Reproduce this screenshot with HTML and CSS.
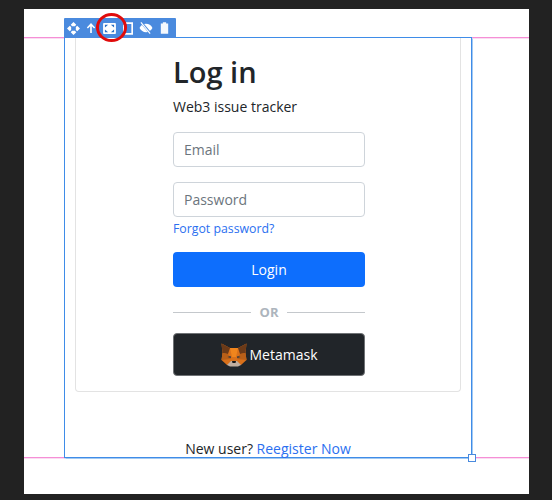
FILE: index.html
```html
<!DOCTYPE html>
<html>
<head>
    <link rel="stylesheet" href="styles.css">
    <title>Log in</title>
</head>
<body>
<div class="canvas">
    <div class="guide guide-top"></div>
    <div class="guide guide-bottom"></div>

    <div class="frame">
        <div class="toolbar">
            <svg class="tool tool-move" viewBox="0 0 14 14"><path d="M7 0l3 3-1.500 1.500h-3L4 3zM14 7l-3 3-1.500-1.500v-3L11 4zM7 14l-3-3 1.500-1.500h3L10 11zM0 7l3-3 1.500 1.500v3L3 10z" fill="#fff"/></svg>
            <svg class="tool tool-up" viewBox="0 0 12 14"><path d="M6 1l5 5.400-1.300 1.200L7 4.900V13H5V4.900L2.300 7.600 1 6.400z" fill="#fff"/></svg>
            <svg class="tool tool-full" viewBox="0 0 14 12"><rect x="0" y="0" width="14" height="12" rx="1" fill="#fff"/><path d="M2 2h3.500L2 5zM12 2v3L8.500 2zM2 10V7l3.500 3zM12 10H8.500L12 7z" fill="#2a6fc4"/></svg>
            <svg class="tool tool-copy" viewBox="0 0 12 15"><path d="M3 1h8v13H1V3" fill="none" stroke="#fff" stroke-width="2"/></svg>
            <svg class="tool tool-eye" viewBox="0 0 15 13"><path d="M0.500 6.500C2 3.500 4.500 2 7.500 2s5.500 1.500 7 4.500C13 9.500 10.500 11 7.500 11S2 9.500 0.500 6.500z" fill="#fff"/><path d="M2.500 0.500l10 12" stroke="#4a8ade" stroke-width="2.400"/><path d="M2 0.500l10 12" stroke="#fff" stroke-width="1.200"/></svg>
            <svg class="tool tool-trash" viewBox="0 0 11 14"><path d="M3.500 0h4v1.500H10V14H1V1.500h2.500z" fill="#f4f8fd"/></svg>
        </div>
        <div class="focus-ring"></div>
        <div class="handle"></div>

        <div class="card">
            <form class="login-form">
                <h1 class="title">Log in</h1>
                <p class="subtitle">Web3 issue tracker</p>
                <input class="field field-email" type="text" placeholder="Email">
                <input class="field" type="password" placeholder="Password">
                <a class="forgot" href="#">Forgot password?</a>
                <button class="btn btn-login" type="button">Login</button>
                <div class="divider"><span>OR</span></div>
                <button class="btn btn-metamask" type="button">
                    <svg class="fox" viewBox="0 0 26 24">
                        <path d="M0.500 0.500L9 5h8l8.500-4.500L24.500 10l1 7L20 22H6L0.500 17l1-7z" fill="#d9701a"/>
                        <path d="M0.500 0.500L9 5 7 11 1.500 10z" fill="#6b3a18"/>
                        <path d="M25.500 0.500L17 5l2 6 5.500-1z" fill="#6b3a18"/>
                        <path d="M9 5h8l-2 9h-4z" fill="#f0851d"/>
                        <path d="M1.500 10l5.500 1 3 5-9.500 1z" fill="#b85f18"/>
                        <path d="M24.500 10l-5.500 1-3 5 9.500 1z" fill="#b85f18"/>
                        <path d="M6.500 14l3-1 0.500 2z" fill="#233447"/>
                        <path d="M19.500 14l-3-1-0.500 2z" fill="#233447"/>
                        <path d="M6 22l4-4h6l4 4-3 1.500H9z" fill="#c0ad9e"/>
                        <path d="M11 18h4l-0.500 2h-3z" fill="#161616"/>
                    </svg>
                    Metamask
                </button>
            </form>
        </div>
        <p class="signup">New user? <a href="#">Reegister Now</a></p>
    </div>
</div>
</body>
</html>
```
FILE: styles.css
```css
body, html {
    margin: 0;
    padding: 0;
    height: 100%;
    background: #222222;
    overflow: hidden;
    font-family: "Open Sans", Arial, sans-serif;
    color: #212529;
}

.canvas {
    position: relative;
    box-sizing: border-box;
    width: 505px;
    height: 485px;
    margin: 9px 0 0 24px;
    padding: 28px 0 0 40px;
    background: #ffffff;
    float: left;
}

.guide {
    position: absolute;
    left: 0;
    right: 0;
    height: 1px;
    background: #f58fd6;
    box-shadow: 0 1px 0 #fbdcf2;
}

.guide-top {
    top: 28px;
}

.guide-bottom {
    top: 448px;
}

.frame {
    position: relative;
    box-sizing: border-box;
    width: 408px;
    height: 421px;
    border: 1px solid #3f8ce8;
    box-shadow: 0 0 1px 0.500px #a3c9f2;
    padding: 0 10px;
    background: #ffffff;
}

.toolbar {
    position: absolute;
    top: -20px;
    left: -1px;
    width: 112px;
    height: 20px;
    background: #4a8ade;
    display: flex;
    align-items: center;
    border-radius: 1px 1px 0 0;
}

.tool {
    display: block;
    flex: none;
}

.tool-move {
    width: 13px;
    height: 13px;
    margin-left: 3px;
}

.tool-up {
    width: 10px;
    height: 12px;
    margin-left: 6px;
}

.tool-full {
    width: 13px;
    height: 11px;
    margin-left: 7px;
}

.tool-copy {
    width: 10px;
    height: 13px;
    margin-left: 7px;
}

.tool-eye {
    width: 14px;
    height: 12px;
    margin-left: 6px;
}

.tool-trash {
    width: 9px;
    height: 12px;
    margin-left: 7px;
}

.focus-ring {
    position: absolute;
    top: -25px;
    left: 31px;
    width: 25px;
    height: 23px;
    border: 3px solid #e00b0b;
    border-radius: 50%;
}

.handle {
    position: absolute;
    right: -5px;
    bottom: -5px;
    box-sizing: border-box;
    width: 8px;
    height: 8px;
    background: #ffffff;
    border: 1px solid #4a8ade;
}

.card {
    box-sizing: border-box;
    height: 354px;
    border: 1px solid #e3e3e3;
    border-top: none;
    border-radius: 0 0 4px 4px;
}

.login-form {
    display: flex;
    flex-direction: column;
    width: 192px;
    margin-left: 97px;
}

.title {
    margin: 14px 0 0;
    font-size: 29px;
    line-height: 40px;
    font-weight: 600;
}

.subtitle {
    margin: 4px 0 0;
    font-size: 14px;
    line-height: 22px;
}

.field {
    box-sizing: border-box;
    width: 192px;
    height: 35px;
    margin: 0;
    padding: 0 10px;
    border: 1px solid #ced4da;
    border-radius: 4px;
    font-family: inherit;
    font-size: 14px;
    background: #ffffff;
}

.field::placeholder {
    color: #6c757d;
    opacity: 1;
}

.field-email {
    margin: 14px 0 15px;
}

.forgot {
    margin-top: 3px;
    font-size: 12.300px;
    line-height: 17px;
    color: #2b6ff0;
    text-decoration: none;
}

.btn {
    box-sizing: border-box;
    width: 192px;
    border: none;
    border-radius: 4px;
    color: #ffffff;
    font-family: inherit;
    font-size: 14px;
    cursor: pointer;
}

.btn-login {
    height: 35px;
    margin-top: 15px;
    background: #0d6efd;
}

.divider {
    display: flex;
    align-items: center;
    gap: 9px;
    margin-top: 16px;
    height: 18px;
    font-size: 13px;
    font-weight: 700;
    color: #adb5bd;
}

.divider::before,
.divider::after {
    content: "";
    flex: 1;
    height: 1px;
    background: #c4c8cc;
}

.btn-metamask {
    display: flex;
    align-items: center;
    justify-content: center;
    gap: 3px;
    height: 43px;
    margin-top: 12px;
    background: #212529;
    border: 1px solid #6f7275;
}

.fox {
    width: 26px;
    height: 24px;
}

.signup {
    margin: 47px 0 0;
    text-align: center;
    font-size: 14px;
    line-height: 20px;
}

.signup a {
    color: #2b6ff0;
    text-decoration: none;
}
```
